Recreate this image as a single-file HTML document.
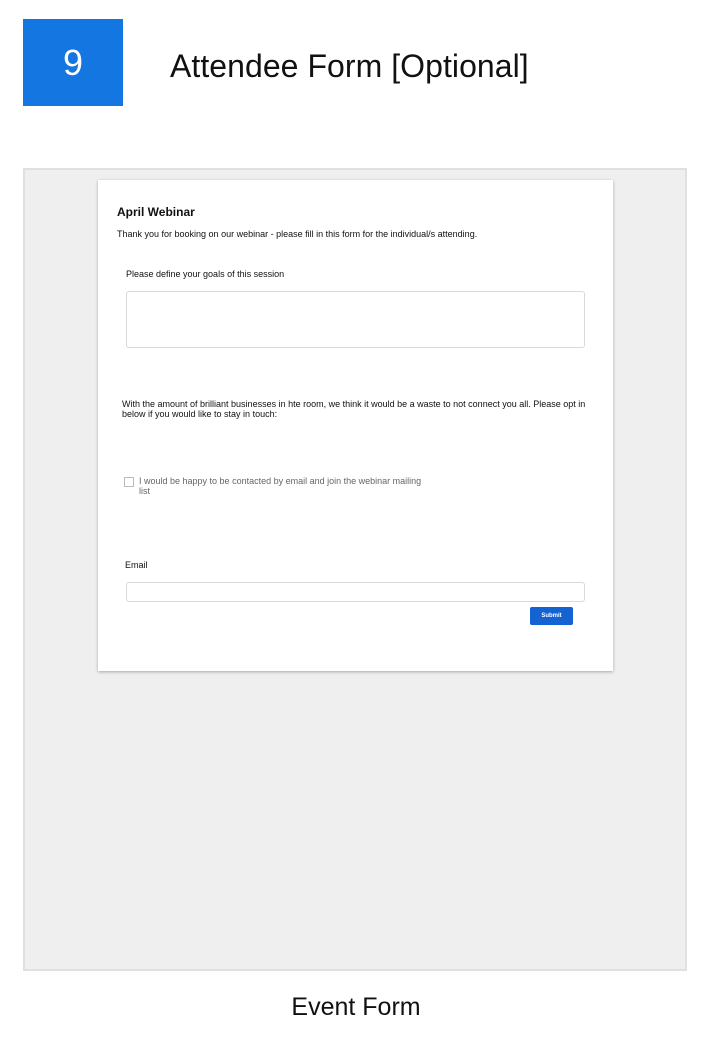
<!DOCTYPE html>
<html><head><meta charset="utf-8"><style>
*{margin:0;padding:0;box-sizing:border-box}
body{width:716px;height:1038px;background:#fff;position:relative;font-family:"Liberation Sans",Arial,sans-serif;overflow:hidden}
.abs{position:absolute}
.num{left:23px;top:19px;width:100px;height:87px;background:#1476e0;color:#fff;font-size:36px;text-align:center;line-height:87px;font-weight:300}
.title{left:170px;top:48px;font-size:32px;color:#111;letter-spacing:0.05px}
.panel{left:23px;top:168px;width:664px;height:803px;background:#efefef;border:2px solid #e0e0e0}
.card{left:98px;top:180px;width:515px;height:491px;background:#fff;box-shadow:0 1px 3px rgba(0,0,0,.3)}
.t{font-size:9px;color:#111}
.box{border:1px solid #d9d9d9;border-radius:3px;background:#fff}
.btn{left:530px;top:607px;width:43px;height:18px;background:#1363d3;border-radius:2px;color:#fff;font-size:6px;font-weight:bold;text-align:center;line-height:18px}
.cap{left:0;width:712px;top:993px;text-align:center;font-size:25px;color:#111}
</style></head><body>
<div class="abs num">9</div>
<div class="abs title">Attendee Form [Optional]</div>
<div class="abs panel"></div>
<div class="abs card"></div>
<div class="abs" style="left:117px;top:205px;font-size:12px;font-weight:bold;color:#111">April Webinar</div>
<div class="abs t" style="left:117px;top:229px">Thank you for booking on our webinar - please fill in this form for the individual/s attending.</div>
<div class="abs t" style="left:126px;top:269px">Please define your goals of this session</div>
<div class="abs box" style="left:126px;top:291px;width:459px;height:57px"></div>
<div class="abs t" style="left:122px;top:399px;width:470px;line-height:10px">With the amount of brilliant businesses in hte room, we think it would be a waste to not connect you all. Please opt in below if you would like to stay in touch:</div>
<div class="abs" style="left:124px;top:477px;width:10px;height:10px;border:1px solid #bbb"></div>
<div class="abs t" style="left:139px;top:476px;width:290px;line-height:10px;color:#666">I would be happy to be contacted by email and join the webinar mailing list</div>
<div class="abs t" style="left:125px;top:560px">Email</div>
<div class="abs box" style="left:126px;top:582px;width:459px;height:20px"></div>
<div class="abs btn">Submit</div>
<div class="abs cap">Event Form</div>
</body></html>
